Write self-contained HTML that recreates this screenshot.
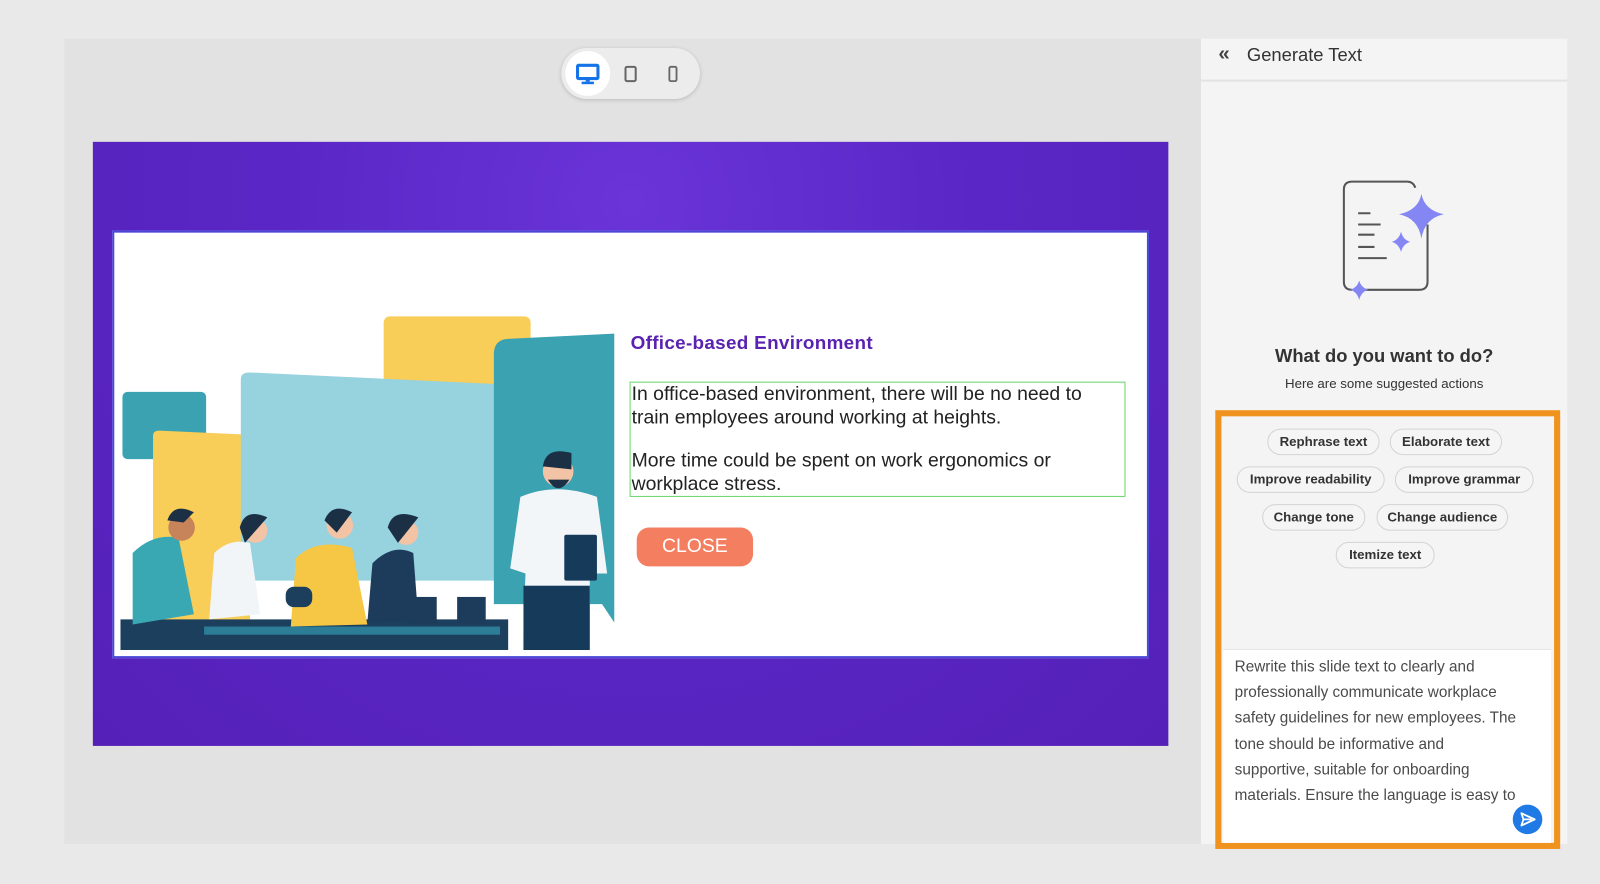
<!DOCTYPE html>
<html><head><meta charset="utf-8"><style>
*{margin:0;padding:0;box-sizing:border-box}
body{width:1600px;height:884px;background:#e9e9e9;font-family:"Liberation Sans",sans-serif;position:relative;overflow:hidden}
#wrap{position:absolute;left:0;top:0;width:1568px;height:866px;transform:scale(1.0204);transform-origin:0 0}
.abs{position:absolute}
#canvas{left:63px;top:38px;width:1114px;height:789px;background:#e2e2e2}
#toolbar{left:550px;top:47px;width:136px;height:50px;border-radius:25px;background:#ececec;box-shadow:0 1px 4px rgba(0,0,0,.18)}
#slide{left:91px;top:139px;width:1054px;height:592px;background:radial-gradient(ellipse at 50% 10%,#6a34d8 0%,#5a27c6 45%,#5520b8 100%)}
#card{left:110px;top:226px;width:1016px;height:419px;background:#fff;border:2px solid #4a46d8}
#panel{left:1177px;top:38px;width:359px;height:789px;background:#f4f4f4}
.chip{position:absolute;height:26px;border:1.5px solid #d3d3d3;border-radius:13px;background:#f5f5f5;font-size:13px;font-weight:bold;color:#333;line-height:23px;text-align:center;white-space:nowrap}
</style></head><body><div id="wrap">
<div id="canvas" class="abs"></div>
<div id="toolbar" class="abs">
  <div class="abs" style="left:4px;top:3px;width:44px;height:44px;border-radius:22px;background:#fff"></div>
  <svg class="abs" style="left:14px;top:15px" width="24" height="22" viewBox="0 0 24 22"><rect x="2" y="2" width="20" height="13" rx="1" fill="none" stroke="#1473e6" stroke-width="3"/><rect x="10" y="15" width="4" height="3" fill="#1473e6"/><rect x="6" y="18" width="12" height="2.5" fill="#1473e6"/></svg>
  <svg class="abs" style="left:61px;top:17px" width="14" height="18"><rect x="2" y="1.5" width="10" height="14" rx="1.5" fill="none" stroke="#666" stroke-width="2"/></svg>
  <svg class="abs" style="left:104px;top:17px" width="12" height="18"><rect x="2" y="1.5" width="7" height="14" rx="1.5" fill="none" stroke="#666" stroke-width="1.8"/></svg>
</div>
<div id="slide" class="abs"></div>
<div id="card" class="abs">
<svg class="abs" style="left:6px;top:80px" width="490" height="330" viewBox="118 306 490 330">
  <rect x="120" y="382" width="82" height="66" rx="5" fill="#3aa2b0"/>
  <path d="M150 425 Q150 420 156 420 L245 424 L245 630 L150 630Z" fill="#f8cd58"/>
  <rect x="376" y="308" width="144" height="80" rx="6" fill="#f8cd58"/>
  <path d="M236 370 Q236 363 244 363 L500 375 L500 567 L236 567Z" fill="#97d2df"/>
  <path d="M484 345 Q484 330 500 330 L602 325 L602 608 L590 590 L484 590Z" fill="#3aa2b0"/>
  <rect x="118" y="605" width="380" height="30" fill="#1c3f5e"/>
  <rect x="200" y="612" width="290" height="8" fill="#2c7d95"/>
  <path d="M130 540 Q150 520 175 525 L190 600 L130 610Z" fill="#3aa8b2"/>
  <circle cx="178" cy="515" r="13" fill="#c7835a"/><path d="M164 508 Q170 490 190 500 L180 510Z" fill="#1b2f45"/>
  <path d="M210 540 Q225 525 245 530 L255 600 L205 605Z" fill="#f2f5f8"/>
  <circle cx="250" cy="518" r="12" fill="#f2c3a5"/><path d="M235 515 Q240 495 262 505 L240 530Z" fill="#1b2f45"/>
  <path d="M290 545 Q310 525 345 535 L360 610 L285 612Z" fill="#f6c744"/>
  <circle cx="333" cy="513" r="13" fill="#f2c3a5"/><path d="M318 508 Q325 490 345 500 L330 520Z" fill="#1b2f45"/>
  <path d="M365 550 Q385 530 405 540 L410 605 L360 608Z" fill="#1d3b5a"/>
  <circle cx="398" cy="520" r="12" fill="#f2c3a5"/><path d="M380 515 Q385 495 410 505 L390 530Z" fill="#1b2f45"/>
  <rect x="400" y="583" width="28" height="26" fill="#1d3b5a"/><rect x="448" y="583" width="28" height="26" fill="#1d3b5a"/>
  <rect x="280" y="573" width="26" height="20" rx="8" fill="#1c3f5e"/>
  <path d="M510 485 Q545 470 585 485 L595 560 L578 560 L578 635 L512 635 L515 560 L500 555Z" fill="#f2f6f9"/>
  <rect x="513" y="572" width="65" height="63" fill="#163a5a"/>
  <circle cx="547" cy="460" r="15" fill="#f2c3a5"/><path d="M532 455 Q535 435 560 442 L560 458Z" fill="#1b2f45"/><path d="M537 468 Q547 485 558 468Z" fill="#1b2f45"/>
  <rect x="553" y="522" width="32" height="45" rx="2" fill="#163a5a"/>
</svg>
<div class="abs" style="left:506px;top:97px;font-size:18.5px;letter-spacing:0.3px;font-weight:bold;color:#5a22b0;white-space:nowrap">Office-based Environment</div>
<div class="abs" style="left:505px;top:146px;width:486px;height:113px;border:1.5px solid #6ad66a;padding:0 0 0 1px;font-size:19px;color:#222;line-height:23px;white-space:nowrap">In office-based environment, there will be no need to<br>train employees around working at heights.<div style="height:19px"></div>More time could be spent on work ergonomics or<br>workplace stress.</div>
<div class="abs" style="left:512px;top:289px;width:114px;height:38px;border-radius:12px;background:#f47f60;color:#fff;font-size:19px;line-height:38px;text-align:center">CLOSE</div>
</div>
<div id="panel" class="abs">
  <div class="abs" style="left:0;top:40px;width:359px;height:2px;background:#e3e3e3"></div>
  <div class="abs" style="left:17px;top:4px;font-size:20px;color:#444;font-weight:bold">«</div>
  <div class="abs" style="left:45px;top:6px;font-size:18px;color:#333">Generate Text</div>
  <svg class="abs" style="left:136px;top:136px" width="110" height="124" viewBox="1312 174 110 124">
    <path d="M1350 178 L1324 178 Q1316 178 1316 186 L1316 276 Q1316 284 1324 284 M1336 284 L1390 284 Q1398 284 1398 276 L1398 220 M1350 178 L1378 178 Q1384 178 1386 184" fill="none" stroke="#555" stroke-width="2"/>
    <path d="M1330 209h12M1330 220h22M1330 230h16M1330 242h16M1330 253h28" stroke="#555" stroke-width="2"/>
    <path d="M1392 190 Q1395 206 1414 210 Q1395 214 1392 234 Q1389 214 1370 210 Q1389 206 1392 190Z" fill="#8487f3"/>
    <path d="M1372 227 Q1374 235 1381 237 Q1374 239 1372 247 Q1370 239 1363 237 Q1370 235 1372 227Z" fill="#8487f3"/>
    <path d="M1331 275 Q1333 282 1340 284 Q1333 286 1331 294 Q1329 286 1322 284 Q1329 282 1331 275Z" fill="#8487f3"/>
  </svg>
  <div class="abs" style="left:0;width:359px;top:301px;text-align:center;font-size:18px;color:#333;font-weight:bold">What do you want to do?</div>
  <div class="abs" style="left:0;width:359px;top:330px;text-align:center;font-size:13px;color:#333">Here are some suggested actions</div>
</div>
<div class="abs" style="left:1191px;top:402px;width:338px;height:430px;border:6px solid #f0921e"></div>
<div class="chip" style="left:1242px;top:420px;width:110px">Rephrase text</div>
<div class="chip" style="left:1362px;top:420px;width:110px">Elaborate text</div>
<div class="chip" style="left:1212px;top:457px;width:145px">Improve readability</div>
<div class="chip" style="left:1367px;top:457px;width:136px">Improve grammar</div>
<div class="chip" style="left:1237px;top:494px;width:101px">Change tone</div>
<div class="chip" style="left:1349px;top:494px;width:129px">Change audience</div>
<div class="chip" style="left:1309px;top:531px;width:97px">Itemize text</div>
<div class="abs" style="left:1199px;top:636px;width:321px;height:190px;background:#fff;border-top:1px solid #e6e6e6;padding:4px 11px;font-size:15px;line-height:25.2px;color:#4a4a4a;white-space:nowrap">Rewrite this slide text to clearly and<br>professionally communicate workplace<br>safety guidelines for new employees. The<br>tone should be informative and<br>supportive, suitable for onboarding<br>materials. Ensure the language is easy to</div>
<svg class="abs" style="left:1482px;top:788px" width="30" height="30"><circle cx="15" cy="15" r="14.5" fill="#1f7ae6"/><path d="M9 9 L22 15 L9 21 L11 15Z M11 15h8" fill="none" stroke="#fff" stroke-width="1.8" stroke-linejoin="round"/></svg>
</div></body></html>
